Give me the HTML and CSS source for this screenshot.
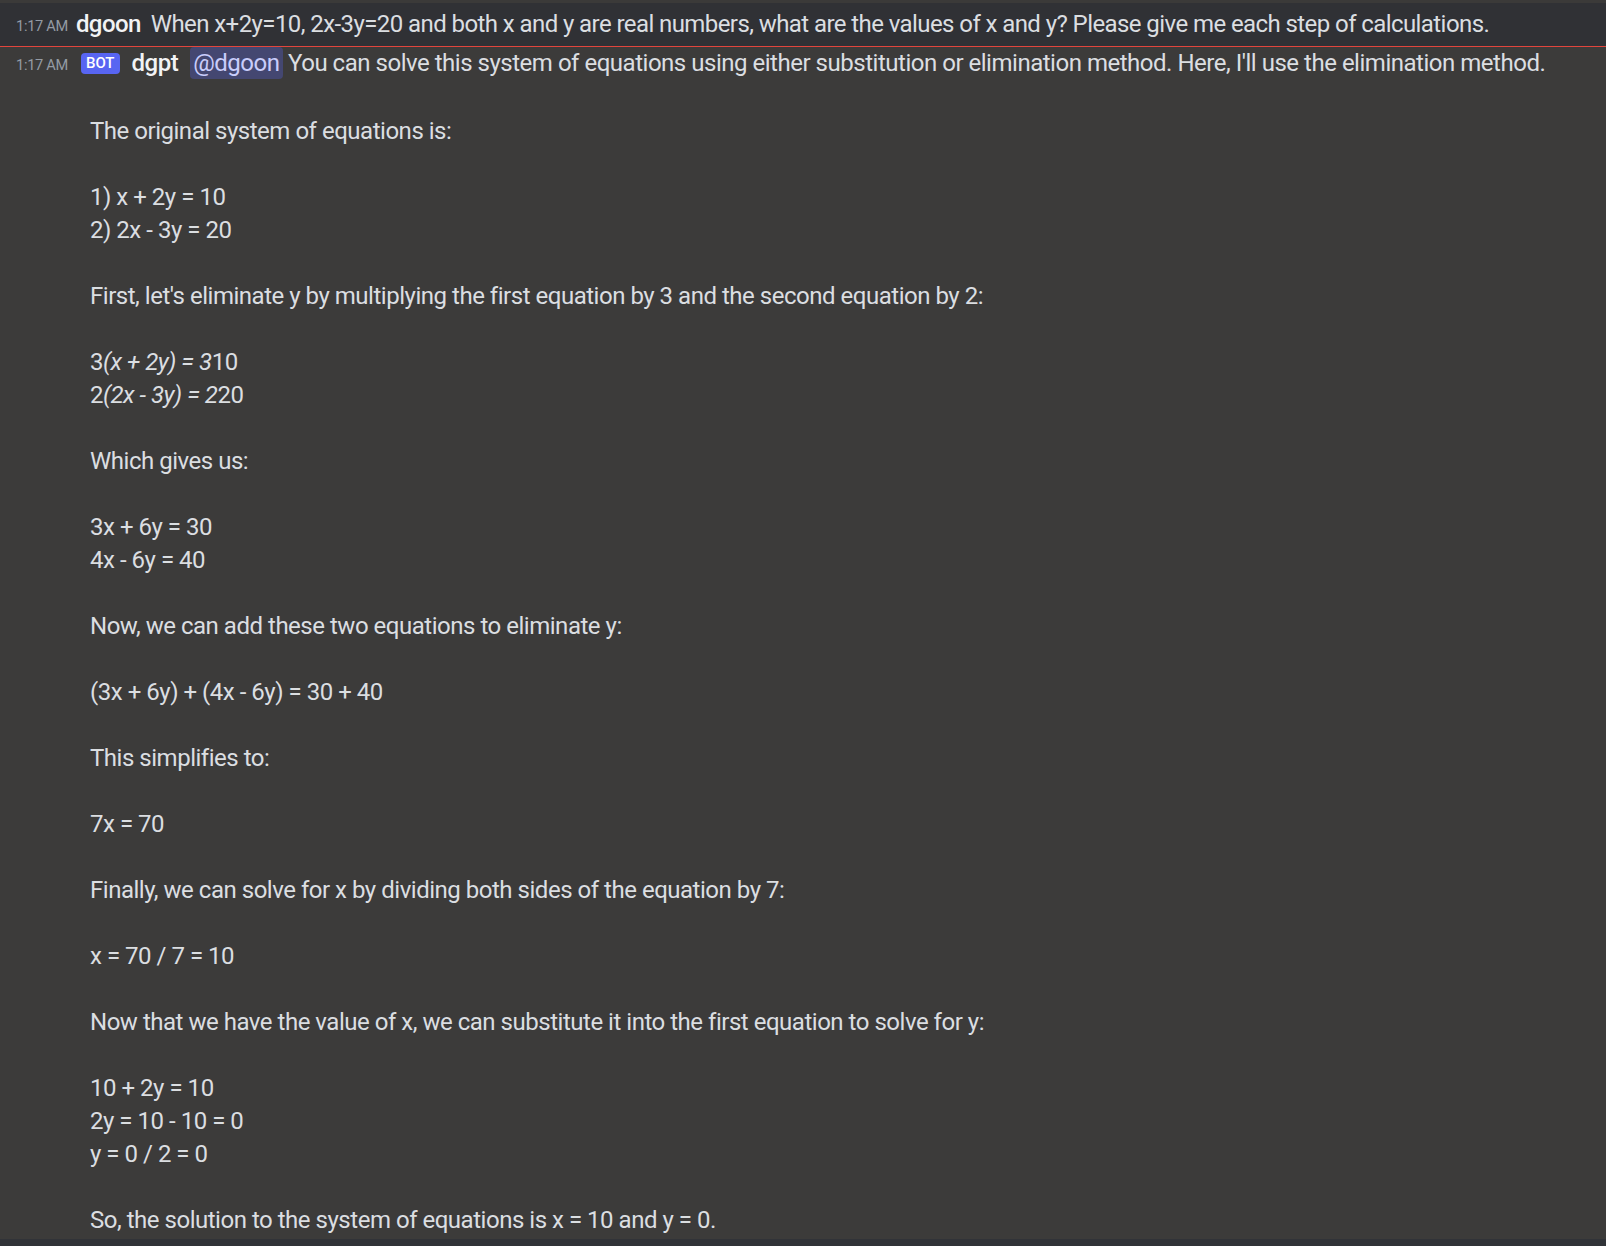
FILE: index.html
```html
<!DOCTYPE html>
<html lang="en">
<head>
<meta charset="utf-8">
<title>Chat</title>
<link rel="stylesheet" href="styles.css">
</head>
<body>
<div class="chat">
  <div class="top-strip"></div>
  <div class="msg msg-user"><span class="ts">1:17 AM</span><span class="name name-user">dgoon</span>When x+2y=10, 2x-3y=20 and both x and y are real numbers, what are the values of x and y? Please give me each step of calculations.</div>
  <div class="divider"></div>
  <div class="msg msg-bot"><span class="ts">1:17 AM</span><span class="badge">BOT</span><span class="name name-bot">dgpt</span><span class="mention">@dgoon</span> You can solve this system of equations using either substitution or elimination method. Here, I'll use the elimination method.

The original system of equations is:

1) x + 2y = 10
2) 2x - 3y = 20

First, let's eliminate y by multiplying the first equation by 3 and the second equation by 2:

3<em>(x + 2y) = 3</em>10
2<em>(2x - 3y) = 2</em>20

Which gives us:

3x + 6y = 30
4x - 6y = 40

Now, we can add these two equations to eliminate y:

(3x + 6y) + (4x - 6y) = 30 + 40

This simplifies to:

7x = 70

Finally, we can solve for x by dividing both sides of the equation by 7:

x = 70 / 7 = 10

Now that we have the value of x, we can substitute it into the first equation to solve for y:

10 + 2y = 10
2y = 10 - 10 = 0
y = 0 / 2 = 0

So, the solution to the system of equations is x = 10 and y = 0.</div>
  <div class="bottom-band"></div>
</div>
</body>
</html>
```

FILE: styles.css
```css
html, body {
  margin: 0;
  padding: 0;
  background: #3c3b3a;
}

.chat {
  width: 1606px;
  height: 1246px;
  display: flex;
  flex-direction: column;
  overflow: hidden;
  font-family: Roboto, "Noto Sans", sans-serif;
  color: #dbdee1;
}

.top-strip {
  height: 3px;
  background: #3b3a39;
  flex: none;
}

.msg {
  font-size: 24px;
  line-height: 33px;
  letter-spacing: -0.48px;
  padding-left: 90px;
  text-indent: -74px;
  padding-right: 10px;
  white-space: pre-wrap;
}

.msg-user {
  background: #303135;
  padding-top: 5px;
  padding-bottom: 3px;
  letter-spacing: -0.58px;
  flex: none;
}

.divider {
  height: 1px;
  background: #e2453d;
  flex: none;
}

.msg-bot {
  background: #3c3b3a;
  padding-top: 0;
  flex: 1;
}

.msg em {
  font-style: italic;
}

.ts {
  font-size: 14.6px;
  letter-spacing: -0.3px;
  color: #949ba4;
  margin-right: 8px;
  vertical-align: 1px;
}

.name {
  font-weight: 500;
  color: #f2f3f5;
}

.name-user {
  margin-right: 10px;
}

.name-bot {
  margin-right: 12px;
}

.badge {
  display: inline-block;
  text-indent: 0;
  background: #5865f2;
  color: #ffffff;
  font-size: 15px;
  font-weight: 500;
  letter-spacing: 0;
  line-height: 21px;
  height: 21px;
  padding: 0 5px;
  border-radius: 4px;
  margin-left: 5px;
  margin-right: 12px;
  vertical-align: 3px;
}

.mention {
  background: #444771;
  color: #c9cdfb;
  border-radius: 4px;
  padding: 2px 3px;
}

.bottom-band {
  height: 7px;
  background: #313338;
  flex: none;
}
```
